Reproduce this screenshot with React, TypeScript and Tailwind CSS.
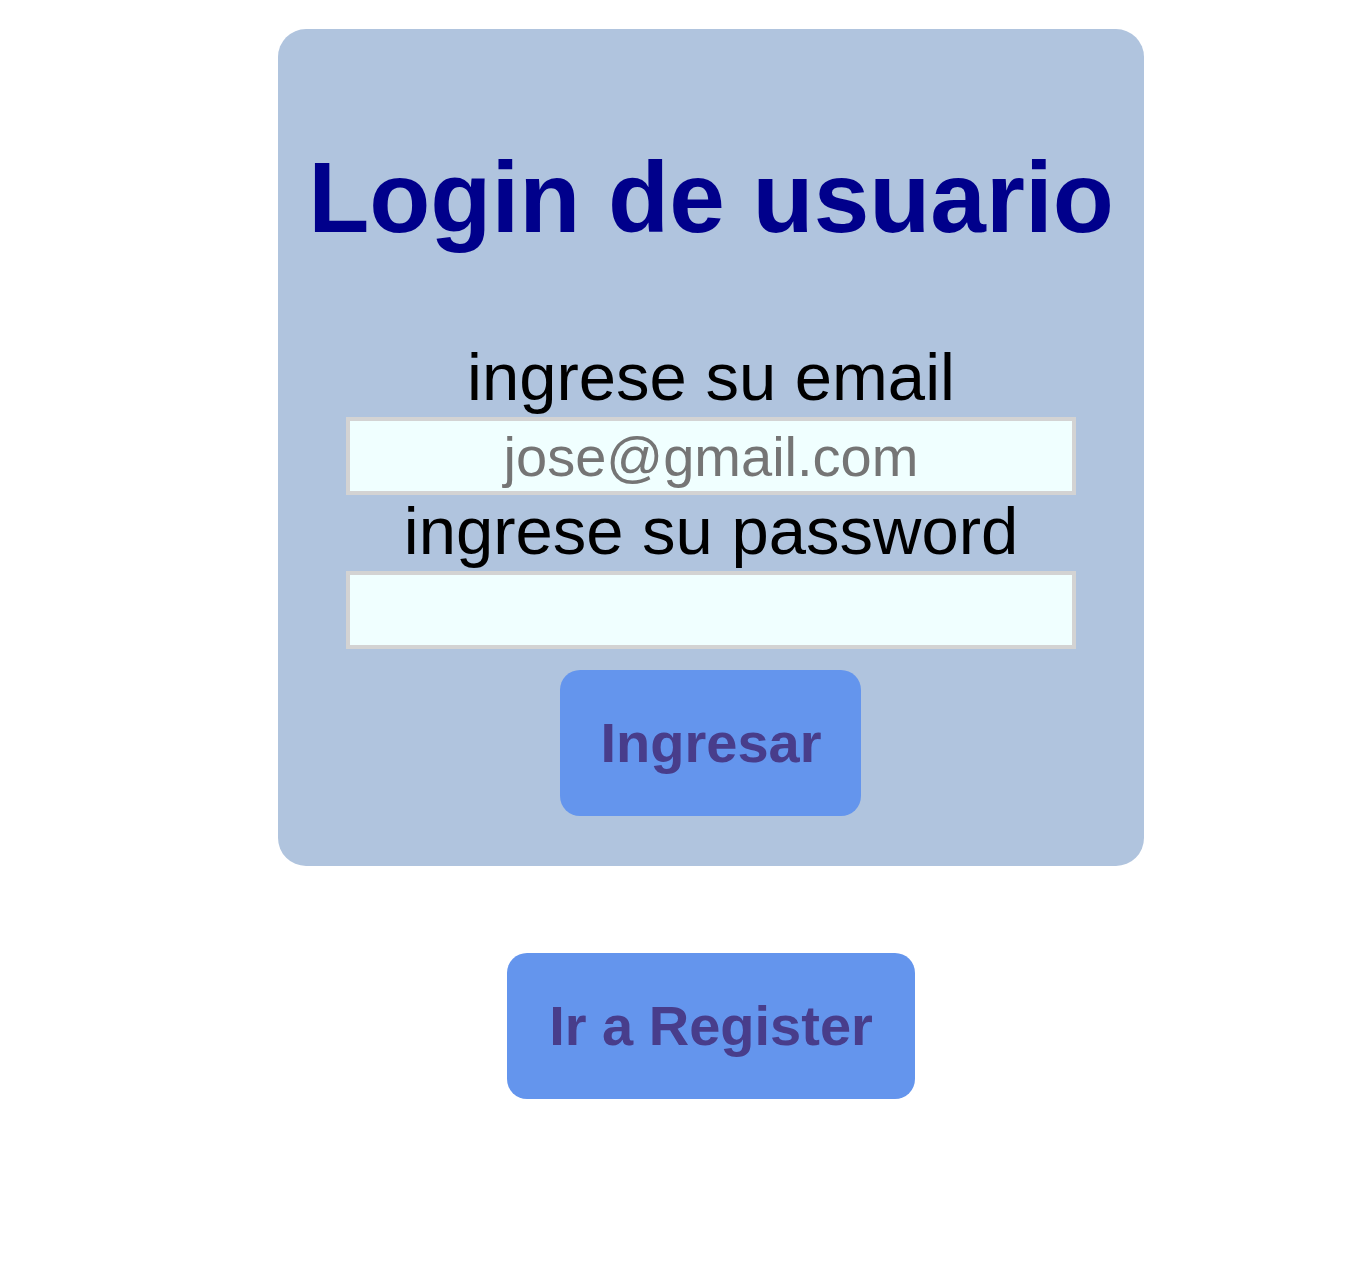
export default function App() {
  return (
    <main className="flex min-h-screen flex-col items-center bg-white pt-[29px] pl-[52px] font-['Liberation_Sans',Arial,sans-serif]">
      <form
        className="flex flex-col items-center rounded-[28px] bg-[#b0c4de] px-[30px] pt-28 pb-[50px]"
        onSubmit={(event) => event.preventDefault()}
      >
        <h1 className="text-[100px] leading-[112px] font-bold whitespace-nowrap text-[#00008b]">
          Login de usuario
        </h1>
        <div className="mt-[88px] flex w-full flex-col px-[38px] text-center">
          <label htmlFor="email" className="mb-1 text-[67px] leading-[72px] text-black">
            ingrese su email
          </label>
          <input
            id="email"
            type="email"
            placeholder="jose@gmail.com"
            className="h-[78px] w-full border-4 border-[#d3d3d3] bg-[#f0ffff] text-center text-[56px] leading-[64px] text-black outline-none placeholder:text-[#757575]"
          />
          <label htmlFor="password" className="mb-1 text-[67px] leading-[72px] text-black">
            ingrese su password
          </label>
          <input
            id="password"
            type="password"
            className="h-[78px] w-full border-4 border-[#d3d3d3] bg-[#f0ffff] text-center text-[56px] leading-[64px] text-black outline-none"
          />
        </div>
        <button
          type="submit"
          className="mt-[21px] rounded-[20px] bg-[#6495ed] px-10 py-10 text-[56px] leading-[66px] font-bold text-[#483d8b]"
        >
          Ingresar
        </button>
      </form>
      <button
        type="button"
        className="mt-[87px] rounded-[20px] bg-[#6495ed] px-[42px] py-10 text-[56px] leading-[66px] font-bold text-[#483d8b]"
      >
        Ir a Register
      </button>
    </main>
  );
}
